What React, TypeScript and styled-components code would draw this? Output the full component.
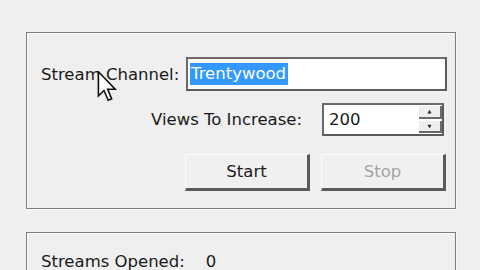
import React from "react";
import styled, { createGlobalStyle } from "styled-components";

const GlobalStyle = createGlobalStyle`
    html, body {
        margin: 0;
        padding: 0;
        background: #efefef;
        overflow: hidden;
    }
    body {
        font-family: "DejaVu Sans", "Liberation Sans", sans-serif;
        color: #1a1a1a;
    }
`;

const Window = styled.div`
    position: relative;
    width: 480px;
    height: 270px;
    padding: 32px 0 0 26px;
    box-sizing: border-box;
    display: flex;
    flex-direction: column;
    gap: 23px;
`;

const GroupBox = styled.div<{ $open?: boolean }>`
    width: 430px;
    box-sizing: border-box;
    border: 1px solid #7c7c7c;
    border-bottom: ${(p) => (p.$open ? "none" : "1px solid #7c7c7c")};
    box-shadow: inset 1px 1px 0 #fafafa, 1px 1px 0 #fafafa;
    display: flex;
    flex-direction: column;
    padding: ${(p) => (p.$open ? "19px 0 0 14px" : "24px 0 17px 0")};
    height: ${(p) => (p.$open ? "60px" : "auto")};
`;

const Row = styled.div<{ $gap: number; $right: number; $end?: boolean }>`
    display: flex;
    align-items: center;
    justify-content: ${(p) => (p.$end ? "flex-end" : "space-between")};
    padding: 0 ${(p) => p.$right}px 0 14px;
    margin-bottom: ${(p) => p.$gap}px;
`;

const Label = styled.span`
    font-size: 16.5px;
    white-space: nowrap;
`;

const TextBox = styled.div<{ $width: number }>`
    width: ${(p) => p.$width}px;
    height: 34px;
    box-sizing: border-box;
    background: #fff;
    border: 2px solid #6a6a6a;
    border-right-color: #5c5c5c;
    border-bottom-color: #5c5c5c;
    display: flex;
    align-items: center;
    padding-left: 2px;
    font-size: 16.5px;
`;

const Selected = styled.span`
    background: #3399ff;
    color: #fff;
    padding: 1px 2px 2px 1px;
`;

const SpinWrap = styled(TextBox)`
    margin-left: 20px;
    height: 33px;
    padding-left: 5px;
    justify-content: space-between;
`;

const SpinButtons = styled.div`
    display: flex;
    flex-direction: column;
    gap: 2px;
    align-self: stretch;
    padding: 1px 0;
`;

const SpinBtn = styled.div`
    width: 23px;
    flex: 1;
    background: #eeeeee;
    border-right: 2px solid #6a6a6a;
    border-bottom: 2px solid #6a6a6a;
    box-sizing: border-box;
    display: flex;
    align-items: center;
    justify-content: center;
    font-size: 5px;
    color: #222;
`;

const Button = styled.div<{ $disabled?: boolean }>`
    width: 125px;
    height: 37px;
    box-sizing: border-box;
    background: #f0f0f0;
    border-top: 1px solid #fdfdfd;
    border-left: 1px solid #fdfdfd;
    border-right: 3px solid #5a5a5a;
    border-bottom: 3px solid #5a5a5a;
    display: flex;
    align-items: center;
    justify-content: center;
    font-size: 16.5px;
    color: ${(p) => (p.$disabled ? "#a3a3a3" : "#1a1a1a")};
`;

const Buttons = styled.div`
    display: flex;
    gap: 11px;
    justify-content: flex-end;
    padding-right: 9px;
`;

const Stat = styled.div`
    display: flex;
    align-items: center;
    gap: 21px;
    font-size: 16.5px;
`;

const Cursor = styled.svg`
    position: absolute;
    left: 97px;
    top: 71px;
`;

export default function App() {
    return (
        <>
            <GlobalStyle />
            <Window>
                <GroupBox>
                    <Row $gap={12} $right={8}>
                        <Label>Stream Channel:</Label>
                        <TextBox $width={261}>
                            <Selected>Trentywood</Selected>
                        </TextBox>
                    </Row>
                    <Row $gap={18} $right={11} $end>
                        <Label>Views To Increase:</Label>
                        <SpinWrap $width={122}>
                            <span>200</span>
                            <SpinButtons>
                                <SpinBtn>▲</SpinBtn>
                                <SpinBtn>▼</SpinBtn>
                            </SpinButtons>
                        </SpinWrap>
                    </Row>
                    <Buttons>
                        <Button>Start</Button>
                        <Button $disabled>Stop</Button>
                    </Buttons>
                </GroupBox>
                <GroupBox $open>
                    <Stat>
                        <span>Streams Opened:</span>
                        <span>0</span>
                    </Stat>
                </GroupBox>
                <Cursor width="22" height="32" viewBox="0 0 13 20">
                    <path
                        d="M0.5 0.5 L0.5 15.5 L4 12.2 L6.6 18.3 L8.8 17.4 L6.3 11.4 L11 11.4 Z"
                        fill="#fff"
                        stroke="#111"
                        strokeWidth="1"
                        strokeLinejoin="miter"
                    />
                </Cursor>
            </Window>
        </>
    );
}
